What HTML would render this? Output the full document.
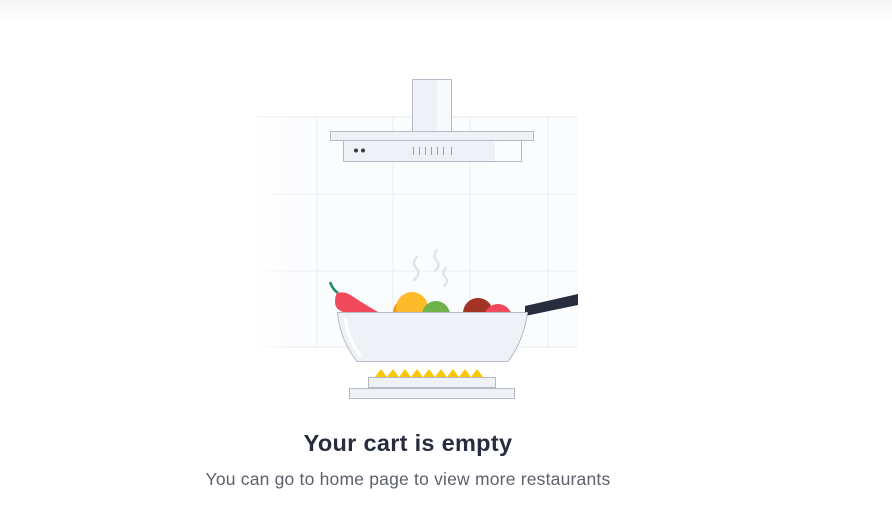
<!DOCTYPE html>
<html><head><meta charset="utf-8"><style>
html,body{margin:0;width:892px;height:508px;background:#fff;overflow:hidden;font-family:"Liberation Sans",sans-serif}
.top{position:absolute;left:0;top:0;width:892px;height:24px;background:linear-gradient(#f4f4f5,#fff)}
h1{position:absolute;left:-38px;width:892px;top:430px;margin:0;text-align:center;font-size:23.5px;font-weight:bold;color:#282c3f;letter-spacing:0.3px}
p{position:absolute;left:-38px;width:892px;top:469px;margin:0;text-align:center;font-size:17.5px;color:#5d606d;letter-spacing:0.2px}
</style></head><body>
<div class="top"></div>
<svg width="892" height="508" style="position:absolute;left:0;top:0">
<defs><linearGradient id="fade" x1="0" x2="1"><stop offset="0" stop-color="#fff" stop-opacity="1"/><stop offset="0.12" stop-color="#fff" stop-opacity="0"/></linearGradient></defs>
<rect x="256" y="117" width="322" height="231" fill="#fbfcfe"/>
<g stroke="#eceef2" stroke-width="1.2">
<line x1="256" y1="117" x2="578" y2="117"/><line x1="256" y1="194" x2="578" y2="194"/><line x1="256" y1="271" x2="578" y2="271"/><line x1="256" y1="347" x2="578" y2="347"/>
<line x1="317" y1="117" x2="317" y2="347"/><line x1="393" y1="117" x2="393" y2="347"/><line x1="470" y1="117" x2="470" y2="347"/><line x1="548" y1="117" x2="548" y2="347"/>
</g>
<rect x="256" y="117" width="322" height="231" fill="url(#fade)"/>
<rect x="412.5" y="79.5" width="39" height="52" fill="#eef1f6" stroke="#b6bac4"/>
<rect x="437" y="80" width="14" height="51" fill="#f8f9fb"/>
<rect x="343.5" y="140.5" width="178" height="21" fill="#eef1f6" stroke="#b6bac4"/>
<rect x="495" y="141" width="26" height="20" fill="#fbfcfd"/>
<rect x="330.5" y="131.5" width="203" height="9" fill="#eef1f6" stroke="#b6bac4"/>
<circle cx="356" cy="150.5" r="2" fill="#3a3d4a"/><circle cx="363" cy="150.5" r="2" fill="#3a3d4a"/>
<g stroke="#9a9ea8" stroke-width="1"><line x1="413.5" y1="147" x2="413.5" y2="155"/><line x1="419.5" y1="147" x2="419.5" y2="155"/><line x1="425.5" y1="147" x2="425.5" y2="155"/><line x1="431.5" y1="147" x2="431.5" y2="155"/><line x1="437.5" y1="147" x2="437.5" y2="155"/><line x1="443.5" y1="147" x2="443.5" y2="155"/><line x1="451.5" y1="147" x2="451.5" y2="155"/></g>
<g fill="none" stroke="#dfe5ee" stroke-width="2.5" stroke-linecap="round">
<path d="M417 257 q-6 6 0 12 q4 5 -3 11"/><path d="M437 250 q-5 6 0 11 q4 5 -2 10"/><path d="M446 268 q-5 6 0 10 q3 4 -2 8"/>
</g>
<path d="M330 282 q3 8 8 11" stroke="#1f8f63" stroke-width="2.5" fill="none"/>
<path d="M337 293 q8 -2 15 3 q12 8 26 16 l-35 0 q-8 -3 -8 -10 q0 -6 2 -9z" fill="#f1485c"/>
<circle cx="405" cy="312" r="12" fill="#f7922a"/>
<circle cx="412" cy="308" r="16" fill="#fdbb2b"/>
<circle cx="436" cy="315" r="14" fill="#6db24a"/>
<circle cx="478" cy="313" r="15" fill="#a33325"/>
<circle cx="498" cy="318" r="14" fill="#f1485c"/>
<path d="M525 306 L578 294 L578 305 L525 316z" fill="#282c3f"/>
<path d="M337.5 312.5 L527.5 312.5 Q524 340 508 361.5 L357 361.5 Q340 340 337.5 312.5z" fill="#eef1f6" stroke="#b6bac4"/>
<path d="M345 318 q4 25 16 38" stroke="#fff" stroke-width="3" fill="none"/>
<path d="M375 377 l6 -8 l6 8 l6 -8 l6 8 l6 -8 l6 8 l6 -8 l6 8 l6 -8 l6 8 l6 -8 l6 8 l6 -8 l6 8 l6 -8 l6 8 l6 -8 l6 8 z" fill="#fcc70a"/>
<rect x="368.5" y="377.5" width="127" height="10" fill="#eef1f6" stroke="#b6bac4"/>
<rect x="349.5" y="388.5" width="165" height="10" fill="#eef1f6" stroke="#b6bac4"/>
</svg>
<h1>Your cart is empty</h1>
<p>You can go to home page to view more restaurants</p>
</body></html>
